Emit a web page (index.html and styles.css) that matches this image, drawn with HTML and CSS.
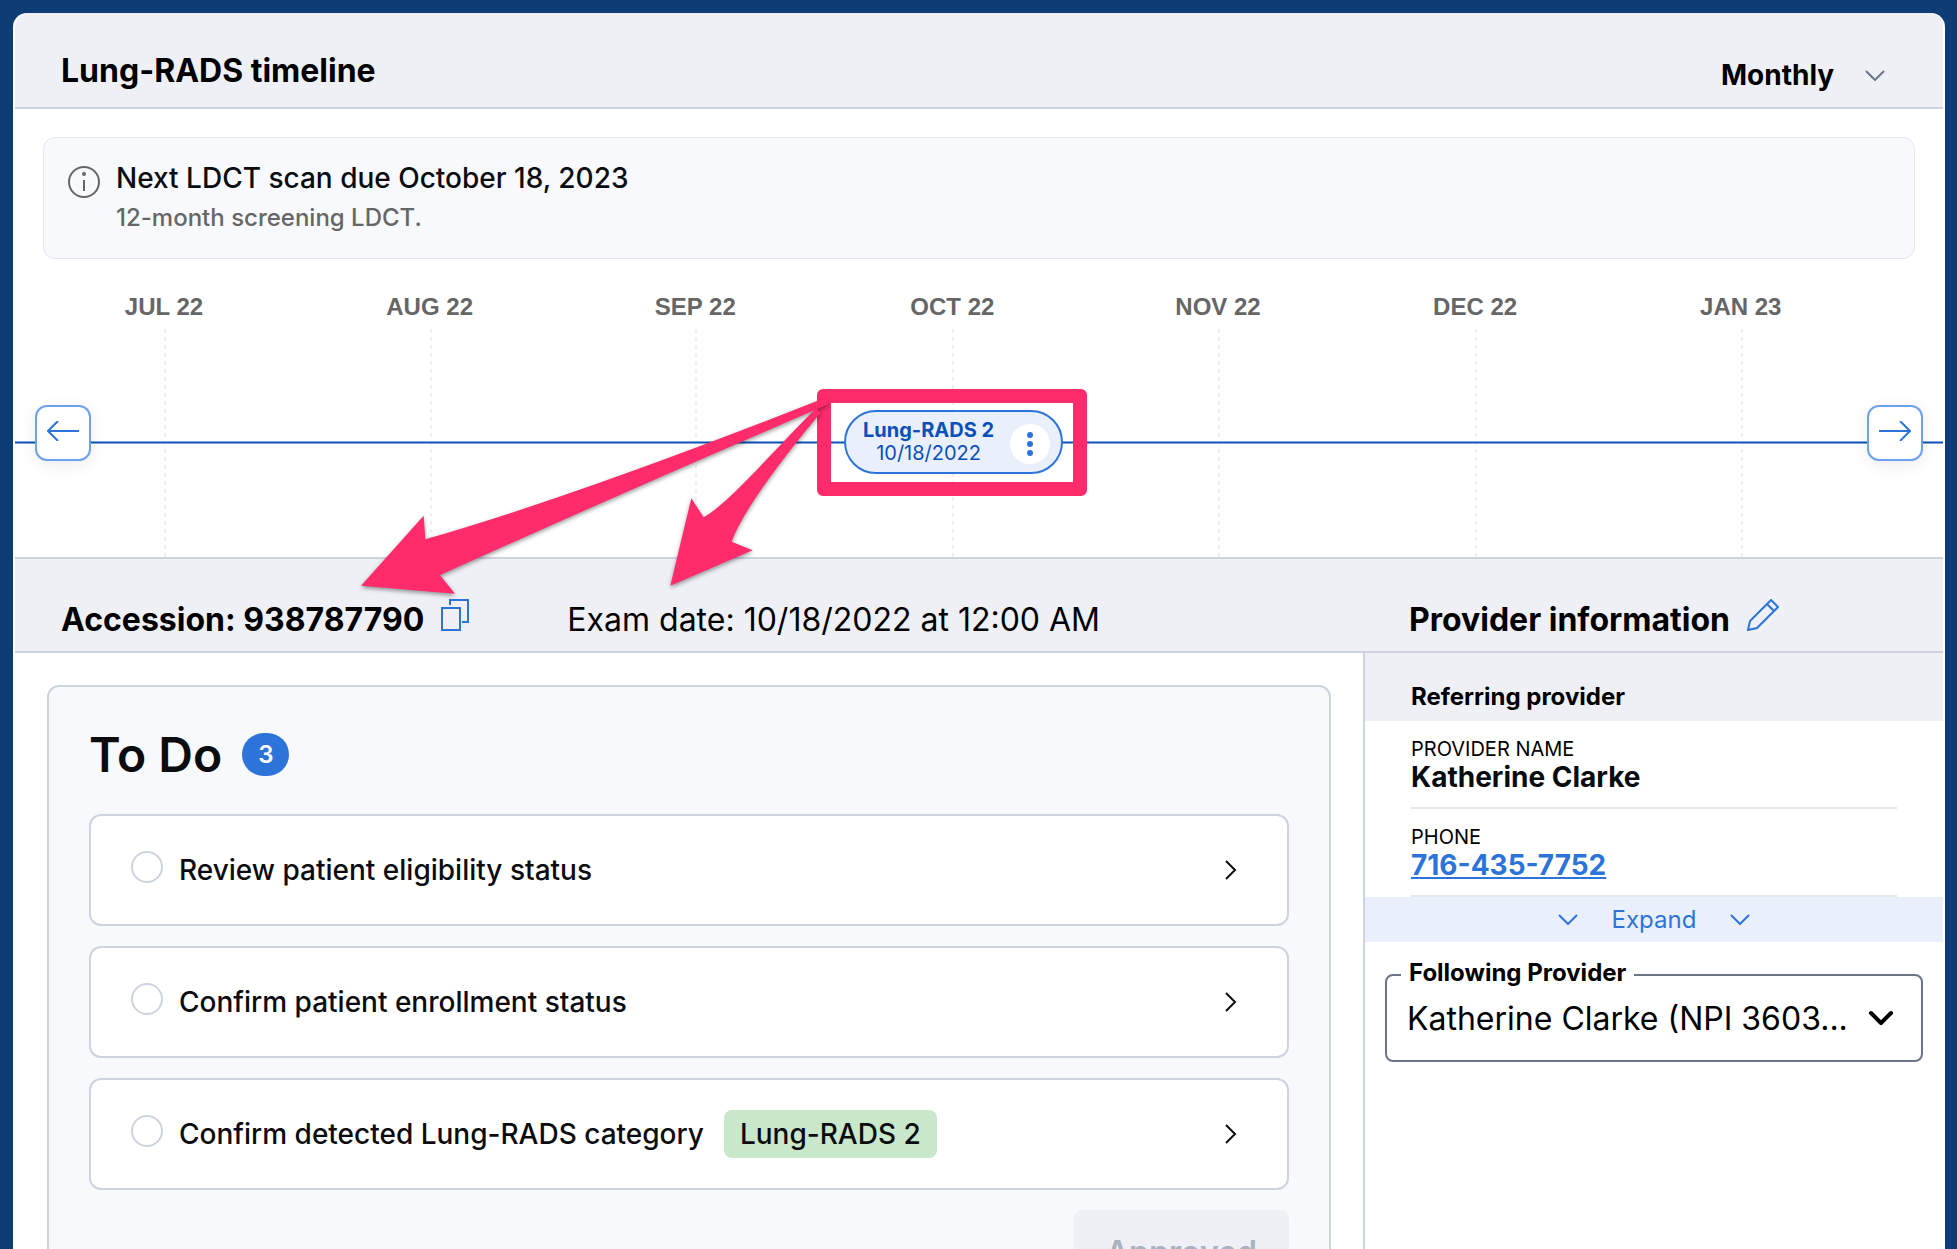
FILE: index.html
```
<!DOCTYPE html>
<html lang="en">
<head>
  <meta charset="UTF-8">
  <meta name="viewport" content="width=device-width, initial-scale=1.0">
  <title>Lung-RADS timeline</title>
  <link rel="stylesheet" href="styles.css">
</head>
<body>
  <main class="panel">
    <header class="panel-header">
      <h1>Lung-RADS timeline</h1>
      <div class="select-wrap period">
        <select aria-label="Timeline period">
          <option>Monthly</option>
        </select>
        <svg class="chevron" viewBox="0 0 20 11" width="20" height="11"><path d="M1 1l9 9 9-9"/></svg>
      </div>
    </header>

    <section class="timeline-section">
      <div class="notice">
        <svg class="info-icon" viewBox="0 0 32 32" width="32" height="32">
          <circle cx="16" cy="16" r="15"/>
          <circle class="dot" cx="16" cy="8" r="2"/>
          <path d="M16 14v11"/>
        </svg>
        <div>
          <p class="notice-title">Next LDCT scan due October 18, 2023</p>
          <p class="notice-text">12-month screening LDCT.</p>
        </div>
      </div>

      <div class="timeline">
        <div class="months">
          <div class="month"><span>JUL 22</span></div>
          <div class="month"><span>AUG 22</span></div>
          <div class="month"><span>SEP 22</span></div>
          <div class="month"><span>OCT 22</span></div>
          <div class="month"><span>NOV 22</span></div>
          <div class="month"><span>DEC 22</span></div>
          <div class="month"><span>JAN 23</span></div>
        </div>
        <div class="axis"></div>
        <button class="nav-btn prev" aria-label="Earlier">
          <svg viewBox="0 0 32 20" width="32" height="20"><path d="M32 10H1M11 0L1 10l10 10"/></svg>
        </button>
        <button class="nav-btn next" aria-label="Later">
          <svg viewBox="0 0 32 20" width="32" height="20"><path d="M0 10h31M21 0l10 10-10 10"/></svg>
        </button>
        <div class="event">
          <div class="event-text">
            <strong>Lung-RADS 2</strong>
            <span>10/18/2022</span>
          </div>
          <button class="event-menu" aria-label="Exam options">
            <svg viewBox="0 0 8 26" width="8" height="26"><circle cx="4" cy="4" r="3"/><circle cx="4" cy="13" r="3"/><circle cx="4" cy="22" r="3"/></svg>
          </button>
          <div class="highlight"></div>
          <svg class="arrows" viewBox="0 0 1500 780" width="500" height="260">
            <path d="M33 617L221 407 226 478Q680 348 1422 55 1442 62 1428 76 870 315 270 585L315 641z"/>
            <path d="M961 617L1024 355 1061 412C1140 365 1230 255 1398 85L1412 98C1330 195 1180 385 1145 485L1208 511z"/>
          </svg>
        </div>
      </div>
    </section>

    <div class="exam-bar">
      <div class="exam-info">
        <h2>Accession: 938787790</h2>
        <button class="icon-btn" aria-label="Copy accession number">
          <svg viewBox="0 0 28 32" width="28" height="32"><path d="M1 9h18v22H1zM9 6V1h18v22h-6"/></svg>
        </button>
        <p class="exam-date">Exam date: 10/18/2022 at 12:00 AM</p>
      </div>
      <div class="provider-title">
        <h2>Provider information</h2>
        <button class="icon-btn" aria-label="Edit provider">
          <svg viewBox="0 0 32 32" width="32" height="32"><path d="M1 31l2-9L24 1l7 7-21 21zM20 5l7 7"/></svg>
        </button>
      </div>
    </div>

    <div class="content">
      <section class="todo-column">
        <div class="todo">
          <div class="todo-header">
            <h2>To Do</h2>
            <span class="count">3</span>
          </div>
          <div class="task">
            <input type="radio" id="task1">
            <label for="task1">Review patient eligibility status</label>
            <svg class="task-arrow" viewBox="0 0 12 20" width="12" height="20"><path d="M1 1l9 9-9 9"/></svg>
          </div>
          <div class="task">
            <input type="radio" id="task2">
            <label for="task2">Confirm patient enrollment status</label>
            <svg class="task-arrow" viewBox="0 0 12 20" width="12" height="20"><path d="M1 1l9 9-9 9"/></svg>
          </div>
          <div class="task">
            <input type="radio" id="task3">
            <label for="task3">Confirm detected Lung-RADS category</label>
            <span class="tag">Lung-RADS 2</span>
            <svg class="task-arrow" viewBox="0 0 12 20" width="12" height="20"><path d="M1 1l9 9-9 9"/></svg>
          </div>
          <button class="approve-btn" disabled>Approved</button>
        </div>
      </section>

      <aside class="provider">
        <h3>Referring provider</h3>
        <dl>
          <div class="field">
            <dt>PROVIDER NAME</dt>
            <dd>Katherine Clarke</dd>
          </div>
          <div class="field">
            <dt>PHONE</dt>
            <dd><a href="tel:7164357752">716-435-7752</a></dd>
          </div>
        </dl>
        <button class="expand-btn">
          <svg class="chevron" viewBox="0 0 20 11" width="20" height="11"><path d="M1 1l9 9 9-9"/></svg>
          Expand
          <svg class="chevron" viewBox="0 0 20 11" width="20" height="11"><path d="M1 1l9 9 9-9"/></svg>
        </button>
        <fieldset>
          <legend><label for="following">Following Provider</label></legend>
          <div class="select-wrap">
            <select id="following">
              <option>Katherine Clarke (NPI 3603...</option>
            </select>
            <svg class="chevron bold" viewBox="0 0 26 16" width="26" height="16"><path d="M3 3l10 10L23 3"/></svg>
          </div>
        </fieldset>
      </aside>
    </div>
  </main>
</body>
</html>
```
FILE: styles.css
```
* {
  margin: 0;
  padding: 0;
  box-sizing: border-box;
}

body {
  height: 100vh;
  padding: 13px 12px 0 13px;
  overflow: hidden;
  background: #0e3c74;
  color: #000;
  font-family: Inter, 'Liberation Sans', sans-serif;
  font-size: 28px;
}

button,
select {
  border: none;
  background: none;
  color: inherit;
  font: inherit;
  cursor: pointer;
}

svg {
  display: block;
  flex: none;
  fill: none;
  stroke: currentColor;
  stroke-width: 2;
}

h1,
h2 {
  font-size: 32px;
  font-weight: 700;
  line-height: 40px;
}

.panel {
  display: flex;
  flex-direction: column;
  height: 100%;
  padding: 0 2px;
  border-radius: 14px 14px 0 0;
  background: #fff;
}

.panel-header {
  display: flex;
  justify-content: space-between;
  align-items: flex-end;
  padding: 0 58px 15px 46px;
  height: 96px;
  border-bottom: 2px solid #cdd3df;
  border-radius: 14px 14px 0 0;
  background: #eff0f6;
}

.panel-header h1 {
  line-height: 42px;
}

.select-wrap {
  display: flex;
  align-items: center;
}

.select-wrap select {
  appearance: none;
  flex: 1;
  min-width: 0;
}

.period select {
  width: 144px;
  font-weight: 700;
}

.period .chevron {
  color: #6b7588;
}

/* Timeline */

.timeline-section {
  padding-top: 28px;
}

.notice {
  display: flex;
  gap: 16px;
  margin: 0 28px;
  padding: 21px 24px;
  height: 122px;
  border: 1px solid #e2e7ee;
  border-radius: 12px;
  background: #f8f9fc;
}

.info-icon {
  margin-top: 7px;
  color: #666;
}

.info-icon .dot {
  fill: currentColor;
  stroke: none;
}

.notice-title {
  color: #0a0c10;
  font-weight: 500;
  line-height: 38px;
}

.notice-text {
  color: #666;
  font-size: 24px;
  font-weight: 500;
  line-height: 41px;
}

.timeline {
  position: relative;
  height: 298px;
}

/* column widths follow the days in each month */
.months {
  display: grid;
  grid-template-columns: 310fr 310fr 300fr 310fr 300fr 310fr 236fr;
  height: 100%;
  padding: 34px 0 0 149px;
}

.month {
  display: flex;
  flex-direction: column;
  align-items: flex-start;
  gap: 8px;
}

.month span {
  transform: translateX(-50%);
  color: #666;
  font-family: 'Liberation Sans', sans-serif;
  font-size: 24px;
  font-weight: 700;
  line-height: 28px;
  white-space: nowrap;
}

.month::after {
  content: '';
  flex: 1;
  width: 2px;
  background: repeating-linear-gradient(#eeeff6 0 4px, transparent 4px 8px);
}

.axis {
  position: absolute;
  top: 182px;
  left: 0;
  right: 0;
  height: 3px;
  border: solid #86a8dd;
  border-width: 1px 0;
  background: #0b4fb8;
}

.nav-btn {
  position: absolute;
  top: 146px;
  display: flex;
  justify-content: center;
  padding-top: 14px;
  width: 56px;
  height: 56px;
  border: 2px solid #6da1ee;
  border-radius: 12px;
  background: #fff;
  color: #2d74da;
  box-shadow: 0 4px 16px rgba(0, 0, 0, 0.08);
}

.prev {
  left: 20px;
}

.next {
  right: 20px;
}

.event {
  position: absolute;
  top: 151px;
  left: 829px;
  display: flex;
  align-items: center;
  justify-content: space-between;
  width: 219px;
  height: 64px;
  padding: 0 11px 0 17px;
  border: 2px solid #2d74da;
  border-radius: 32px;
  background: #e9f0fb;
  color: #0b4fb8;
  font-size: 20px;
  line-height: 23px;
  text-align: center;
}

.event-text {
  display: flex;
  flex-direction: column;
}

.event-menu {
  display: flex;
  align-items: center;
  justify-content: center;
  width: 40px;
  height: 40px;
  margin-top: 4px;
  border-radius: 50%;
  background: #fff;
  color: #2d74da;
}

.event-menu svg {
  fill: currentColor;
  stroke: none;
}

.highlight {
  position: absolute;
  inset: -23px -26px -24px -29px;
  border: 14px solid #ff2b6b;
  border-radius: 6px;
  pointer-events: none;
}

.arrows {
  position: absolute;
  top: -32px;
  left: -496px;
  fill: #ff2b6b;
  stroke: none;
  filter: drop-shadow(0 2px 2px rgba(0, 0, 0, 0.4));
  pointer-events: none;
}

/* Exam bar */

.exam-bar {
  display: flex;
  height: 96px;
  border: solid #cdd3df;
  border-width: 2px 0;
  background: #eff0f6;
}

.exam-info,
.provider-title {
  display: flex;
  align-items: flex-end;
  padding: 0 0 11px 46px;
}

.exam-info {
  flex: 1;
}

.provider-title {
  width: 580px;
}

.icon-btn {
  margin: 0 0 9px 17px;
  color: #2d74da;
}

.exam-date {
  margin-left: 98px;
  font-size: 32px;
  line-height: 40px;
}

/* To do list */

.content {
  display: flex;
  flex: 1;
  min-height: 0;
}

.todo-column {
  flex: 1;
  padding: 32px 32px 0;
}

.todo {
  padding: 38px 40px 40px;
  border: 2px solid #cdd3df;
  border-radius: 12px;
  background: #f8f9fb;
}

.todo-header {
  display: flex;
  align-items: center;
  gap: 20px;
  margin-bottom: 29px;
}

.todo-header h2 {
  color: #0a0c10;
  font-size: 48px;
  font-weight: 600;
  line-height: 60px;
}

.count {
  margin-bottom: 2px;
  padding: 0 16px;
  border-radius: 22px;
  background: #2d74da;
  color: #fff;
  font-size: 24px;
  font-weight: 600;
  line-height: 43px;
}

.task {
  display: flex;
  align-items: center;
  height: 112px;
  margin-bottom: 20px;
  padding: 0 50px 0 40px;
  border: 2px solid #cdd3df;
  border-radius: 12px;
  background: #fff;
  color: #0a0c10;
  font-weight: 500;
}

.task input {
  appearance: none;
  width: 32px;
  height: 32px;
  margin: 0 16px 6px 0;
  border: 2px solid #cdd3df;
  border-radius: 50%;
}

.tag {
  margin-left: 20px;
  padding: 0 16px;
  border-radius: 8px;
  background: #c9e7cb;
  line-height: 48px;
}

.task-arrow {
  margin-left: auto;
}

.approve-btn {
  display: block;
  margin-left: auto;
  padding: 0 32px;
  height: 84px;
  border-radius: 8px;
  background: #eff0f6;
  color: #a8b2c1;
  font-size: 32px;
  font-weight: 600;
}

/* Provider column */

.provider {
  width: 580px;
  border-left: 2px solid #cdd3df;
}

.provider h3 {
  padding: 28px 46px 8px;
  background: #eff0f6;
  font-size: 24px;
  font-weight: 700;
  line-height: 32px;
}

.provider dl {
  padding: 0 46px;
}

.field {
  height: 88px;
  padding-top: 16px;
  border-bottom: 2px solid #e5e8ee;
}

.field dt {
  font-size: 20px;
  line-height: 24px;
}

.field dd {
  color: #0a0c10;
  font-weight: 700;
  line-height: 32px;
}

.field a {
  color: #2d74da;
}

.expand-btn {
  display: flex;
  align-items: center;
  justify-content: center;
  gap: 34px;
  width: 100%;
  height: 45px;
  background: #e9f0fb;
  color: #2d74da;
  font-size: 24px;
}

fieldset {
  margin: 15px 20px 0;
  padding: 0 27px 0 14px;
  border: 2px solid #6b7588;
  border-radius: 8px;
}

legend {
  padding: 0 8px 4px;
  font-size: 24px;
  font-weight: 700;
  line-height: 32px;
}

fieldset .select-wrap {
  height: 67px;
  padding: 0 0 17px 6px;
  font-size: 32px;
}

.chevron.bold {
  stroke-width: 4;
  stroke-linecap: round;
  stroke-linejoin: round;
}
```
